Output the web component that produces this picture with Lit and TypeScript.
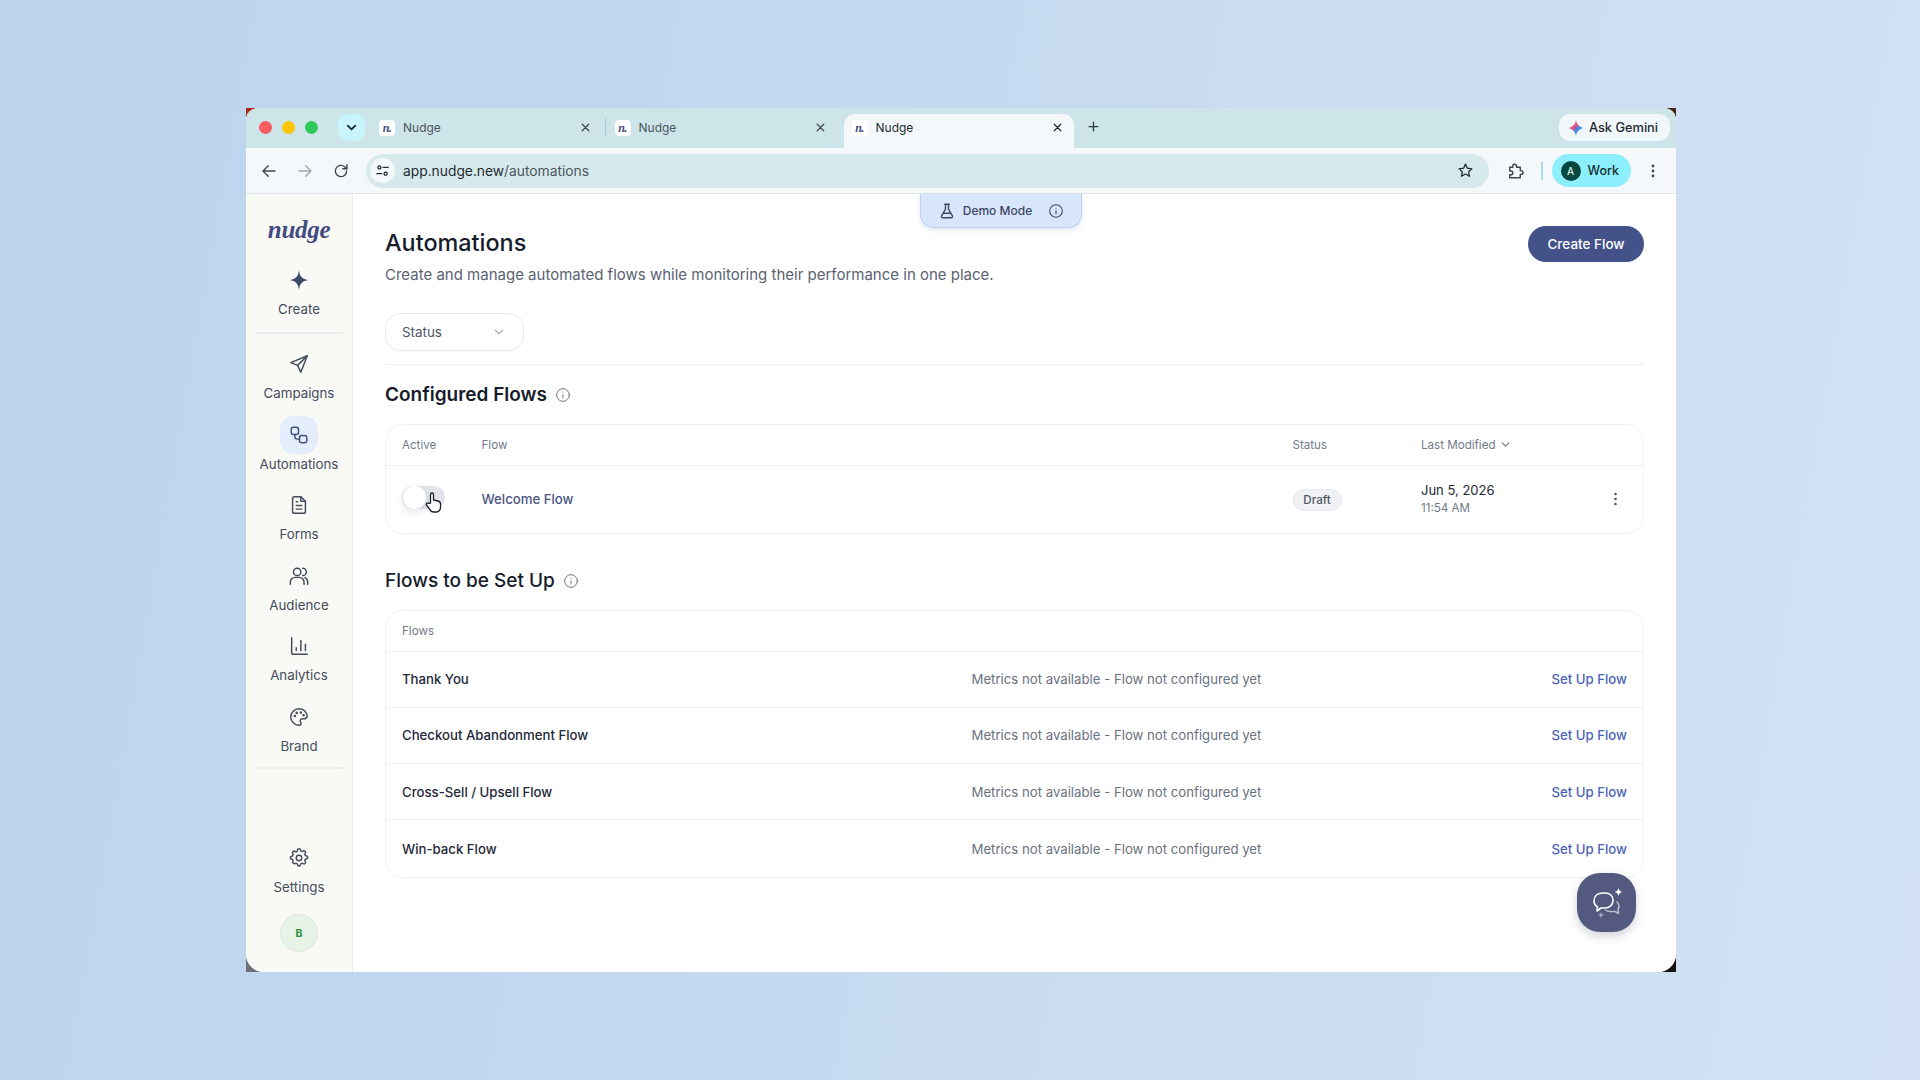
import { LitElement, css, html, svg } from "lit";
import { customElement } from "lit/decorators.js";

const stroke = (body: unknown, size = 20, sw = 2) => html`<svg
  width=${size}
  height=${size}
  viewBox="0 0 24 24"
  fill="none"
  stroke="currentColor"
  stroke-width=${sw}
  stroke-linecap="round"
  stroke-linejoin="round"
>${body}</svg>`;

const icons = {
  back: svg`<path d="M20 12H4.5M11 5l-7 7 7 7"/>`,
  forward: svg`<path d="M4 12h15.5M13 5l7 7-7 7"/>`,
  reload: svg`<path d="M19.5 12a7.5 7.5 0 1 1-2.3-5.4L20 9M20 3.5V9h-5.5"/>`,
  tune: svg`<circle cx="7" cy="7" r="2.5"/><path d="M13 7h8M3 17h8"/><circle cx="17" cy="17" r="2.5"/>`,
  star: svg`<path d="M12 3l2.7 5.8 6.3.8-4.6 4.3 1.2 6.3L12 17l-5.6 3.2 1.2-6.3L3 9.6l6.3-.8z"/>`,
  puzzle: svg`<path d="M5 7h4V5.5a2.5 2.5 0 0 1 5 0V7h5v4.5h1.2a2.5 2.5 0 0 1 0 5H19V21H5v-4h1.5a2.5 2.5 0 0 0 0-5H5z"/>`,
  send: svg`<path d="M21 3L3 10.5l7.5 3L14 21z"/><path d="M21 3L10.5 13.5"/>`,
  flows: svg`<rect x="3.5" y="3.5" width="8" height="8" rx="2.5"/><rect x="12.5" y="12.5" width="8" height="8" rx="2.5"/><path d="M7.5 11.5v2.5a2.5 2.5 0 0 0 2.5 2.5h2.5"/>`,
  forms: svg`<path d="M5 5a2 2 0 0 1 2-2h7l5 5v11a2 2 0 0 1-2 2H7a2 2 0 0 1-2-2z"/><path d="M14 3v5h5M9 12.5h6M9 16.5h6M9 8.5h1.5"/>`,
  audience: svg`<circle cx="10" cy="7.5" r="4"/><path d="M2.5 21v-2a5.5 5.5 0 0 1 5.5-5.5h4a5.5 5.5 0 0 1 5.5 5.5v2M16 3.5a4 4 0 0 1 0 8M18.5 13.8a5.5 5.5 0 0 1 3 5.2v2"/>`,
  chart: svg`<path d="M4 3v16a2 2 0 0 0 2 2h15M9 17v-3M14 17V6M19 17V10"/>`,
  palette: svg`<path d="M12 3a9 9 0 0 0 0 18c1.4 0 2.2-1 2.2-2.1 0-.6-.2-1-.5-1.4-.3-.4-.5-.8-.5-1.3 0-1.2 1-2.2 2.2-2.2h2.1A3.5 3.5 0 0 0 21 11.5C21 6.8 17 3 12 3z"/><circle cx="7.5" cy="11" r=".6" fill="currentColor"/><circle cx="9.5" cy="7.5" r=".6" fill="currentColor"/><circle cx="14" cy="7" r=".6" fill="currentColor"/><circle cx="17" cy="10" r=".6" fill="currentColor"/>`,
  gear: svg`<circle cx="12" cy="12" r="3"/><path d="M10.3 3.5a1.7 1.7 0 0 1 3.4 0 1.7 1.7 0 0 0 2.6 1.1 1.7 1.7 0 0 1 2.4 2.4 1.7 1.7 0 0 0 1.1 2.6 1.7 1.7 0 0 1 0 3.4 1.7 1.7 0 0 0-1.1 2.6 1.7 1.7 0 0 1-2.4 2.4 1.7 1.7 0 0 0-2.6 1.1 1.7 1.7 0 0 1-3.4 0 1.7 1.7 0 0 0-2.6-1.1A1.7 1.7 0 0 1 5.3 16a1.7 1.7 0 0 0-1.1-2.6 1.7 1.7 0 0 1 0-3.4 1.7 1.7 0 0 0 1.1-2.6 1.7 1.7 0 0 1 2.4-2.4 1.7 1.7 0 0 0 2.6-1.1z"/>`,
  flask: svg`<path d="M9 3h6M10 3v6.5L4.8 18.5A1.7 1.7 0 0 0 6.3 21h11.4a1.7 1.7 0 0 0 1.5-2.5L14 9.5V3M7.5 15h9"/>`,
  info: svg`<circle cx="12" cy="12" r="9.5"/><path d="M12 16.5v-5M12 7.8v.1"/>`,
  chevron: svg`<path d="M6 9l6 6 6-6"/>`,
  close: svg`<path d="M6 6l12 12M18 6L6 18"/>`,
  plus: svg`<path d="M12 5v14M5 12h14"/>`,
};

const navTop = [
  { label: "Campaigns", icon: icons.send },
  { label: "Automations", icon: icons.flows, active: true },
  { label: "Forms", icon: icons.forms },
  { label: "Audience", icon: icons.audience },
  { label: "Analytics", icon: icons.chart },
  { label: "Brand", icon: icons.palette },
];

const pending = ["Thank You", "Checkout Abandonment Flow", "Cross-Sell / Upsell Flow", "Win-back Flow"];

@customElement("app-root")
export class AppRoot extends LitElement {
  static styles = css`
    :host {
      display: block;
      width: 1920px;
      height: 1080px;
      overflow: hidden;
      font-family: Inter, "Liberation Sans", sans-serif;
      color: #1c2233;
      background: linear-gradient(100deg, #bcd4ee 0%, #c5d9f0 45%, #d2e2f4 100%);
    }
    * {
      box-sizing: border-box;
    }
    svg {
      display: block;
      flex: none;
    }
    .desk {
      height: 1080px;
      padding: 108px 244px 108px 246px;
    }
    .corners {
      height: 864px;
      background:
        linear-gradient(#a8281c, #a8281c) left top / 16px 16px no-repeat,
        linear-gradient(#4a2416, #4a2416) right top / 16px 16px no-repeat,
        linear-gradient(#6d6f74, #6d6f74) left bottom / 20px 16px no-repeat,
        linear-gradient(#141410, #141410) right bottom / 16px 16px no-repeat;
    }
    .window {
      position: relative;
      height: 100%;
      border-radius: 12px 12px 18px 18px;
      overflow: hidden;
      background: #fff;
      display: flex;
      flex-direction: column;
    }

    /* browser chrome */
    .tabstrip {
      height: 40px;
      flex: none;
      background: #cde4e8;
      display: flex;
      align-items: flex-start;
      padding-left: 13px;
    }
    .lights {
      display: flex;
      gap: 10px;
      margin: 13px 20px 0 0;
    }
    .lights i {
      width: 13px;
      height: 13px;
      border-radius: 50%;
    }
    .tabmenu {
      width: 27px;
      height: 27px;
      margin-top: 6px;
      border-radius: 9px;
      background: #c8f5fc;
      color: #1d2a2e;
      display: grid;
      place-items: center;
      margin-right: 14px;
    }
    .tab {
      width: 212.5px;
      height: 34px;
      margin-top: 6px;
      padding-bottom: 7px;
      display: flex;
      align-items: center;
      font-size: 12px;
      color: #4a565b;
    }
    .tab .label {
      flex: 1;
      padding-left: 8px;
    }
    .tab .x {
      color: #3a4548;
    }
    .fav {
      width: 16px;
      height: 16px;
      border-radius: 4px;
      background: #fff;
      color: #454b7c;
      font: italic 700 12px/16px "Liberation Serif", serif;
      text-align: center;
      letter-spacing: -0.5px;
    }
    .sep {
      width: 1.5px;
      height: 18px;
      background: #9fd4de;
      margin: 10px 8.5px 0 13px;
    }
    .tab.active {
      width: 230px;
      margin-left: 16.5px;
      padding-left: 8px;
      background: #f4f8fb;
      border-radius: 11px 11px 0 0;
      color: #222c30;
    }
    .tab.active .x {
      margin-right: 9.5px;
      color: #1c2528;
    }
    .newtab {
      margin: 11px 0 0 12px;
      color: #2d383b;
    }
    .gemini {
      margin: 6px 6px 0 auto;
      height: 27px;
      width: 111px;
      padding-right: 3px;
      border-radius: 11px;
      background: #f1f7fa;
      display: flex;
      align-items: center;
      justify-content: center;
      gap: 5px;
      font-size: 12.8px;
      font-weight: 500;
      color: #1f2a2e;
    }
    .toolbar {
      height: 46px;
      flex: none;
      background: #f4f8fb;
      border-bottom: 1px solid #dfe6e8;
      display: flex;
      align-items: center;
      color: #3b4649;
      padding-left: 14px;
    }
    .nav-btn {
      margin-right: 18px;
    }
    .nav-btn.off {
      color: #9aa5a8;
    }
    .omni {
      width: 1123px;
      height: 34px;
      margin-left: -2px;
      border-radius: 17px;
      background: #d6e9ec;
      display: flex;
      align-items: center;
      font-size: 13.8px;
      color: #1f2a2e;
      padding-left: 4px;
      padding-right: 15px;
    }
    .tune {
      width: 25px;
      height: 25px;
      border-radius: 50%;
      background: #f4f8fb;
      display: grid;
      place-items: center;
      margin-right: 8px;
    }
    .url span {
      color: #4a565b;
    }
    .omni .star {
      margin-left: auto;
    }
    .puzzle {
      margin-left: 17px;
    }
    .tool-sep {
      width: 1.5px;
      height: 18px;
      background: #a8dce6;
      margin: 0 9px 0 17px;
    }
    .profile {
      width: 79px;
      height: 33px;
      border-radius: 17px;
      background: #8eeffc;
      display: flex;
      align-items: center;
      padding-left: 9px;
      gap: 7px;
      font-size: 12.5px;
      font-weight: 500;
      color: #122c2e;
    }
    .profile b {
      width: 20px;
      height: 20px;
      border-radius: 50%;
      background: #06483f;
      color: #d8efe9;
      font-size: 10px;
      font-weight: 500;
      display: grid;
      place-items: center;
    }
    .kebab {
      margin-left: 14px;
    }

    /* app */
    .app {
      flex: 1;
      min-height: 0;
      display: flex;
      position: relative;
    }
    .side {
      width: 107px;
      flex: none;
      background: #f9f9f6;
      border-right: 1.5px solid #ecedea;
      display: flex;
      flex-direction: column;
      align-items: center;
      padding-top: 19px;
    }
    .logo {
      height: 33px;
      margin-bottom: 15px;
      font: italic 700 25px/33px "Liberation Serif", serif;
      letter-spacing: -0.3px;
      color: #414b7d;
    }
    .item {
      width: 100%;
      flex: none;
      display: flex;
      flex-direction: column;
      align-items: center;
      color: #454c5c;
      font-size: 13.3px;
      line-height: 17px;
      height: 70.5px;
    }
    .item .ic {
      width: 38px;
      height: 38px;
      border-radius: 14px;
      display: grid;
      place-items: center;
      margin-bottom: 2px;
    }
    .item.active .ic {
      background: #e3edfb;
      color: #454f7f;
    }
    .rule {
      width: 87px;
      height: 1.5px;
      flex: none;
      background: #ecedea;
    }
    .create {
      height: 71px;
    }
    .create .ic {
      color: #3e4868;
    }
    .campaign-gap {
      height: 11.5px;
      flex: none;
    }
    .rule.lower {
      margin-top: -1px;
    }
    .spacer {
      flex: 1;
    }
    .settings {
      height: 57px;
    }
    .avatar {
      width: 38px;
      height: 38px;
      border-radius: 50%;
      background: #e6f3e6;
      border: 1px solid #dbe9da;
      color: #2f8f3a;
      font-size: 10.5px;
      font-weight: 700;
      display: grid;
      place-items: center;
      margin-top: 18px;
      margin-bottom: 20px;
      flex: none;
    }

    .main {
      flex: 1;
      min-width: 0;
      padding: 0 32px;
      background: #fff;
    }
    .demo {
      position: absolute;
      left: 674px;
      top: 0;
      width: 162px;
      height: 34px;
      background: #d8e5fb;
      border: 1px solid #bcd0f3;
      border-top: none;
      border-radius: 0 0 14px 14px;
      box-shadow: 0 2px 5px rgba(90, 120, 180, 0.2);
      display: flex;
      align-items: center;
      justify-content: center;
      gap: 7px;
      font-size: 12px;
      font-weight: 500;
      color: #3d4764;
    }
    .demo .info {
      margin-left: 9px;
    }
    .head {
      display: flex;
      justify-content: space-between;
      padding-top: 32px;
    }
    h1 {
      margin: 0;
      padding-top: 0.5px;
      font-size: 23.4px;
      line-height: 32px;
      font-weight: 500;
      color: #161c2b;
    }
    .sub {
      margin: 5px 0 0;
      font-size: 15px;
      line-height: 22px;
      color: #5a6272;
    }
    .cta {
      width: 116px;
      height: 36px;
      border-radius: 18px;
      background: #44528a;
      color: #fff;
      font-size: 13.5px;
      font-weight: 500;
      display: grid;
      place-items: center;
    }
    .select {
      width: 139px;
      height: 37.5px;
      margin-top: 27.5px;
      border: 1px solid #e9eaee;
      border-radius: 15px;
      display: flex;
      align-items: center;
      justify-content: space-between;
      padding: 0 17px 0 16px;
      font-size: 13.4px;
      color: #4e5666;
      box-shadow: 0 1px 2px rgba(20, 30, 50, 0.03);
    }
    .select svg {
      color: #868d9b;
    }
    .divider {
      height: 1px;
      background: #f0f1f3;
      margin-top: 13px;
    }
    h2 {
      margin: 0;
      font-size: 19px;
      line-height: 28px;
      font-weight: 600;
      color: #161c2b;
      display: flex;
      align-items: center;
      gap: 8px;
    }
    h2.medium {
      font-weight: 500;
    }
    h2 svg {
      color: #6c7482;
    }
    h2.one {
      margin-top: 16px;
    }
    h2.two {
      margin-top: 32.5px;
    }
    .table {
      border: 1.5px solid #eef0f2;
      border-radius: 18px;
      margin-top: 15px;
      background: #fff;
    }
    .thead,
    .row {
      display: grid;
      align-items: center;
      padding: 0 16px;
    }
    .config {
      grid-template-columns: 79.5px 1fr 128.5px 188px 18px;
    }
    .thead {
      height: 41px;
      border-bottom: 1.5px solid #eef0f2;
      font-size: 11.6px;
      color: #727a89;
    }
    .thead.single {
      display: flex;
    }
    .sortable {
      display: flex;
      align-items: center;
      gap: 3px;
    }
    .row.config {
      height: 67.5px;
    }
    .toggle {
      width: 43px;
      height: 23px;
      margin-top: -3px;
      position: relative;
    }
    .toggle .track {
      width: 43px;
      height: 23px;
      border-radius: 12px;
      background: #e3e4ea;
    }
    .toggle .thumb {
      position: absolute;
      left: 1px;
      top: 0;
      width: 23px;
      height: 23px;
      border-radius: 50%;
      background: #fff;
      box-shadow: 0 3px 8px rgba(30, 40, 60, 0.14);
    }
    .toggle .hand {
      position: absolute;
      left: 23px;
      top: 6px;
    }
    .flowlink {
      font-size: 13.2px;
      font-weight: 500;
      color: #4b5583;
    }
    .pill {
      display: inline-block;
      width: 49px;
      height: 22px;
      line-height: 20px;
      text-align: center;
      font-size: 11.6px;
      font-weight: 500;
      color: #4e5666;
      background: #f0f1f4;
      border: 1px solid #e6e8ec;
      border-radius: 11px;
    }
    .date {
      font-size: 13px;
      line-height: 17px;
      color: #232938;
    }
    .time {
      font-size: 11.6px;
      line-height: 16px;
      color: #727a89;
      margin-top: 1px;
    }
    .dots {
      color: #4e5666;
    }
    .row.pending {
      height: 56.3px;
      grid-template-columns: 569.5px 1fr auto;
      border-bottom: 1.5px solid #eef0f2;
      font-size: 13.2px;
    }
    .row.pending:last-child {
      border-bottom: none;
    }
    .name {
      font-weight: 500;
      color: #232938;
    }
    .metric {
      color: #6a7280;
    }
    .setup {
      font-weight: 500;
      color: #4d64b6;
    }
    .fab {
      position: absolute;
      right: 40px;
      bottom: 40px;
      width: 59px;
      height: 59px;
      border-radius: 23px;
      background: #54597f;
      box-shadow: 0 4px 10px rgba(40, 45, 80, 0.22);
      display: grid;
      place-items: center;
      color: #fff;
    }
  `;

  private renderTab(active = false) {
    return html`<div class="tab ${active ? "active" : ""}">
      <div class="fav">n.</div>
      <div class="label">Nudge</div>
      <div class="x">${stroke(icons.close, 13, 2.2)}</div>
    </div>`;
  }

  private renderChrome() {
    return html`
      <div class="tabstrip">
        <div class="lights">
          <i style="background:#fb5c5f"></i><i style="background:#fdc602"></i><i style="background:#2ec95b"></i>
        </div>
        <div class="tabmenu">${stroke(icons.chevron, 15, 3)}</div>
        ${this.renderTab()}
        <div class="sep"></div>
        ${this.renderTab()} ${this.renderTab(true)}
        <div class="newtab">${stroke(icons.plus, 15, 2)}</div>
        <div class="gemini">
          <svg width="16" height="16" viewBox="0 0 24 24">
            <defs>
              <linearGradient id="gem" x1="0" y1="0" x2="1" y2="1">
                <stop offset="0" stop-color="#f2a33a" />
                <stop offset=".45" stop-color="#d84a8c" />
                <stop offset=".55" stop-color="#4a86e8" />
                <stop offset="1" stop-color="#34a3c8" />
              </linearGradient>
            </defs>
            <path fill="url(#gem)" d="M12 0c1 6.5 5 11 12 12-7 1-11 5.5-12 12-1-6.5-5-11-12-12 7-1 11-5.5 12-12z" />
          </svg>
          Ask Gemini
        </div>
      </div>
      <div class="toolbar">
        <div class="nav-btn">${stroke(icons.back, 18, 1.8)}</div>
        <div class="nav-btn off">${stroke(icons.forward, 18, 1.8)}</div>
        <div class="nav-btn">${stroke(icons.reload, 18, 1.8)}</div>
        <div class="omni">
          <div class="tune">${stroke(icons.tune, 15, 2)}</div>
          <div class="url">app.nudge.new<span>/automations</span></div>
          <div class="star">${stroke(icons.star, 17, 1.8)}</div>
        </div>
        <div class="puzzle">${stroke(icons.puzzle, 18, 1.9)}</div>
        <div class="tool-sep"></div>
        <div class="profile"><b>A</b>Work</div>
        <div class="kebab">
          <svg width="16" height="16" viewBox="0 0 16 16" fill="currentColor">
            <circle cx="8" cy="3" r="1.4" /><circle cx="8" cy="8" r="1.4" /><circle cx="8" cy="13" r="1.4" />
          </svg>
        </div>
      </div>
    `;
  }

  private renderSide() {
    return html`<aside class="side">
      <div class="logo">nudge</div>
      <div class="item create">
        <div class="ic">
          <svg width="22" height="22" viewBox="0 0 24 24" fill="currentColor">
            <path d="M12 1.5c.9 6.5 3.5 9.6 10.5 10.5-7 .9-9.6 4-10.5 10.5C11.1 16 8.5 12.9 1.5 12 8.5 11.1 11.1 8 12 1.5z" />
          </svg>
        </div>
        Create
      </div>
      <div class="rule"></div>
      <div class="campaign-gap"></div>
      ${navTop.map(
        (n) => html`<div class="item ${n.active ? "active" : ""}">
          <div class="ic">${stroke(n.icon, 22, 1.6)}</div>
          ${n.label}
        </div>`,
      )}
      <div class="rule lower"></div>
      <div class="spacer"></div>
      <div class="item settings">
        <div class="ic">${stroke(icons.gear, 22, 1.6)}</div>
        Settings
      </div>
      <div class="avatar">B</div>
    </aside>`;
  }

  private renderMain() {
    return html`<main class="main">
      <div class="head">
        <div>
          <h1>Automations</h1>
          <p class="sub">Create and manage automated flows while monitoring their performance in one place.</p>
        </div>
        <div class="cta">Create Flow</div>
      </div>
      <div class="select">Status ${stroke(icons.chevron, 14, 1.8)}</div>
      <div class="divider"></div>

      <h2 class="one">Configured Flows ${stroke(icons.info, 16, 1.5)}</h2>
      <div class="table">
        <div class="thead config">
          <div>Active</div>
          <div>Flow</div>
          <div>Status</div>
          <div class="sortable">Last Modified ${stroke(icons.chevron, 13, 2)}</div>
          <div></div>
        </div>
        <div class="row config">
          <div class="toggle">
            <div class="track"></div>
            <div class="thumb"></div>
            <svg class="hand" width="17" height="21" viewBox="0 0 17 21">
              <path
                fill="#fff"
                stroke="#1d1f26"
                stroke-width="1.3"
                stroke-linejoin="round"
                d="M5.5 11V2.5a1.5 1.5 0 0 1 3 0V8l4.5 1c1.5.4 2.5 1.2 2.5 3v3.5c0 2-1.5 4.5-4 4.5H8.5c-1.5 0-2.5-.8-3.4-2L1.5 13c-.8-1.4.9-2.8 2.2-1.6z"
              />
            </svg>
          </div>
          <div class="flowlink">Welcome Flow</div>
          <div><span class="pill">Draft</span></div>
          <div>
            <div class="date">Jun 5, 2026</div>
            <div class="time">11:54 AM</div>
          </div>
          <div class="dots">
            <svg width="13" height="16" viewBox="0 0 13 16" fill="currentColor">
              <circle cx="6.5" cy="3" r="1.3" /><circle cx="6.5" cy="8" r="1.3" /><circle cx="6.5" cy="13" r="1.3" />
            </svg>
          </div>
        </div>
      </div>

      <h2 class="two medium">Flows to be Set Up ${stroke(icons.info, 16, 1.5)}</h2>
      <div class="table">
        <div class="thead single">Flows</div>
        ${pending.map(
          (name) => html`<div class="row pending">
            <div class="name">${name}</div>
            <div class="metric">Metrics not available - Flow not configured yet</div>
            <div class="setup">Set Up Flow</div>
          </div>`,
        )}
      </div>
    </main>`;
  }

  render() {
    return html`<div class="desk">
      <div class="corners">
        <div class="window">
          ${this.renderChrome()}
          <div class="app">
            ${this.renderSide()} ${this.renderMain()}
            <div class="demo">
              ${stroke(icons.flask, 18, 1.8)} Demo Mode
              <span class="info">${stroke(icons.info, 16, 1.6)}</span>
            </div>
            <div class="fab">
              <svg width="36" height="36" viewBox="0 0 36 36" fill="none" stroke="currentColor" stroke-linecap="round" stroke-linejoin="round">
                <path stroke-width="1.6" d="M5 16c0-5 3.5-8 9-8h2c5 0 8 3 8 7.5S20.5 23 16 23h-4l-4 3 .5-4C6 20.5 5 18.5 5 16z" />
                <path stroke-width="1.5" opacity=".6" d="M28 17c2 2 2.5 5 1 7.5l.5 4-3.5-2h-5c-2 0-3.5-.5-4.5-1.5" />
                <path stroke-width="0" fill="currentColor" d="M29.5 3c.5 2.5 1.5 3.5 4 4-2.5.5-3.5 1.5-4 4-.5-2.5-1.5-3.5-4-4 2.5-.5 3.5-1.5 4-4z" />
                <path stroke-width="1" opacity=".6" d="M12 28v4M10 30h4" />
              </svg>
            </div>
          </div>
        </div>
      </div>
    </div>`;
  }
}
